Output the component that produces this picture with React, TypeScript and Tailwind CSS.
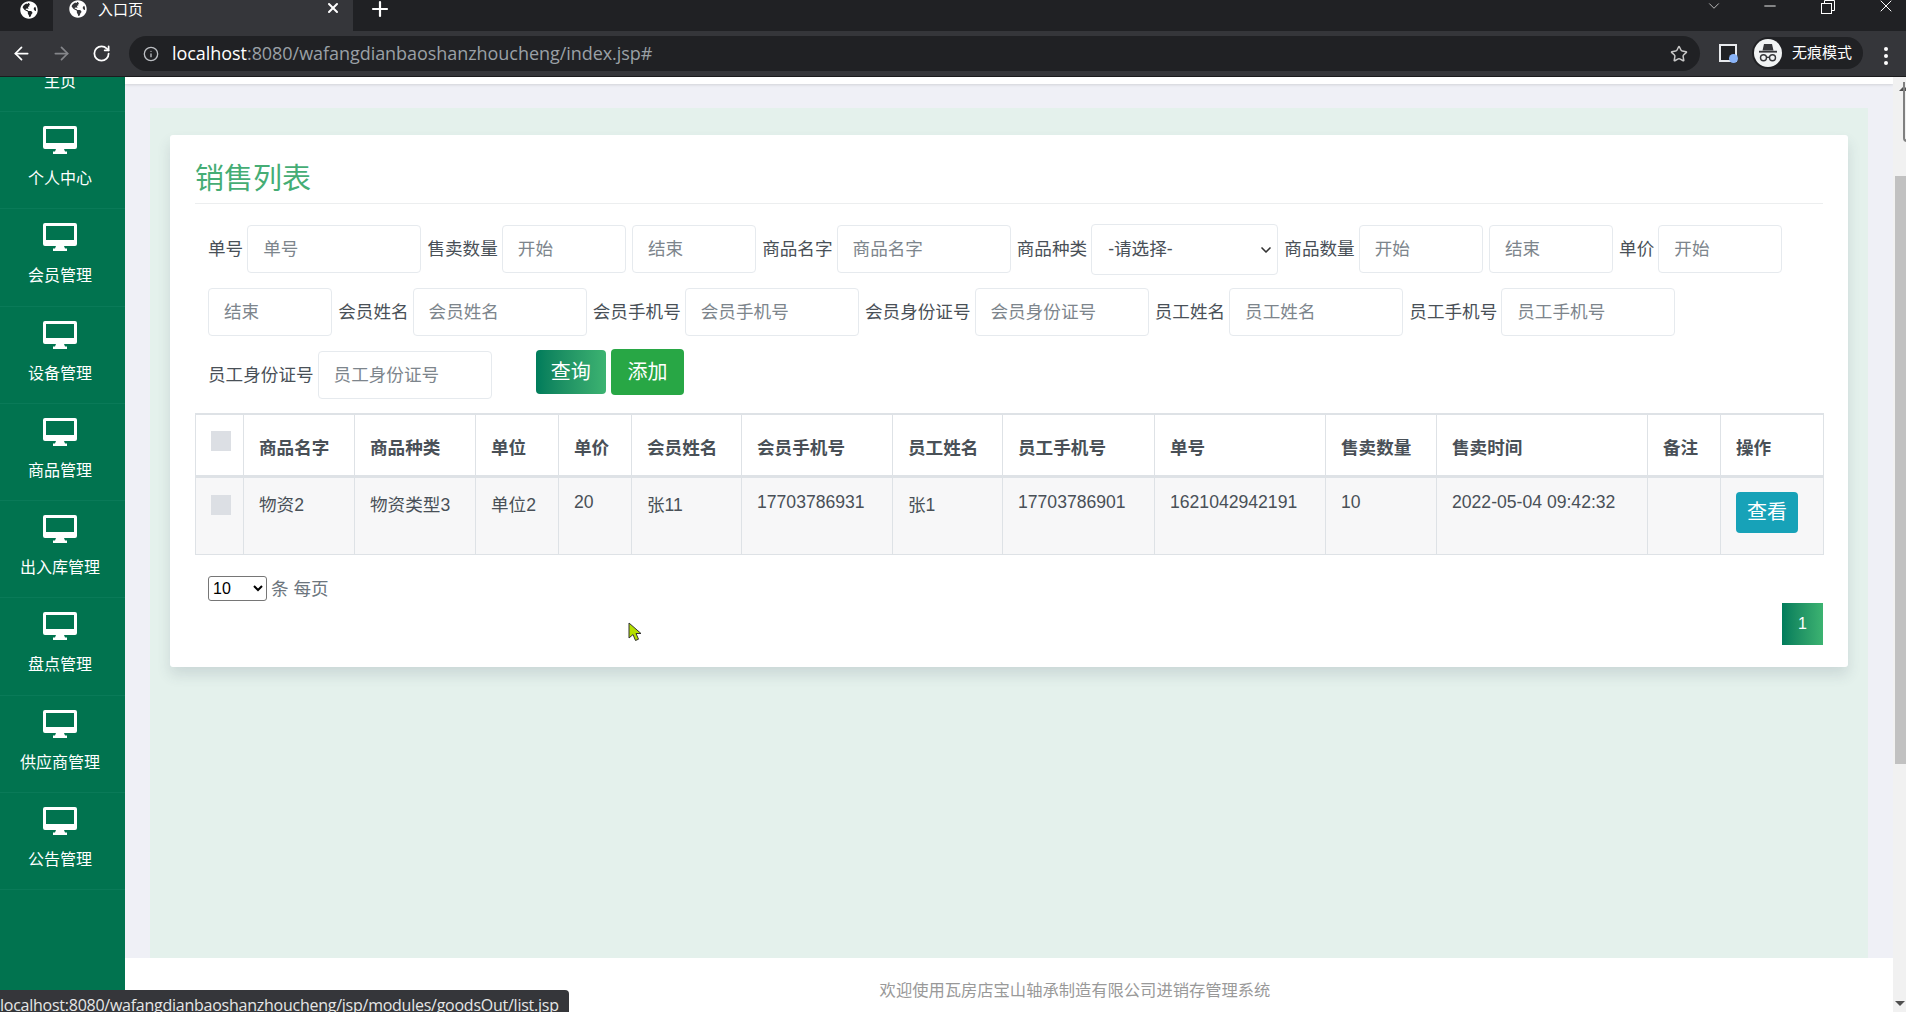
import { ArrowLeft, ArrowRight, ChevronDown, Info, Minus, Plus, RotateCw, Star, X } from "lucide-react"
import { FaGlobeAmericas } from "react-icons/fa"

const CJK = "font-['Liberation_Sans','Noto_Sans_CJK_SC',sans-serif]"

const NAV = ["主页", "个人中心", "会员管理", "设备管理", "商品管理", "出入库管理", "盘点管理", "供应商管理", "公告管理"]

const COLS = [48, 111, 121, 83, 73, 110, 151, 110, 152, 171, 111, 211, 73, 103]
const HEADS = ["商品名字", "商品种类", "单位", "单价", "会员姓名", "会员手机号", "员工姓名", "员工手机号", "单号", "售卖数量", "售卖时间", "备注", "操作"]
const ROW = ["物资2", "物资类型3", "单位2", "20", "张11", "17703786931", "张1", "17703786901", "1621042942191", "10", "2022-05-04 09:42:32", ""]

function Monitor() {
  return (
    <svg viewBox="0 0 34 28" className="h-[28px] w-[34px]" fill="#fff">
      <path
        fillRule="evenodd"
        d="M2 0h30a2 2 0 0 1 2 2v19a2 2 0 0 1-2 2H2a2 2 0 0 1-2-2V2a2 2 0 0 1 2-2zM3 3v14h28V3z"
      />
      <path d="M13 23h8l1 2.500h2V28H10v-2.500h2z" />
    </svg>
  )
}

function Incognito() {
  return (
    <svg viewBox="0 0 28 28" className="h-[28px] w-[28px]">
      <circle cx="14" cy="14" r="14" fill="#f1f3f4" />
      <path d="M10 5h8l1.500 6.500h-11z" fill="#35363a" />
      <rect x="5" y="11.800" width="18" height="1.800" fill="#35363a" />
      <circle cx="9.500" cy="18.800" r="3" fill="none" stroke="#35363a" strokeWidth="1.400" />
      <circle cx="18.500" cy="18.800" r="3" fill="none" stroke="#35363a" strokeWidth="1.400" />
      <path d="M12.500 18.300h3" stroke="#35363a" strokeWidth="1.400" />
    </svg>
  )
}

function Restore() {
  return (
    <svg viewBox="0 0 14 14" className="mr-[41px] mt-0 h-[14px] w-[14px]" fill="none" stroke="#fff" strokeWidth="1">
      <rect x="0.500" y="3.500" width="10" height="10" />
      <path d="M3.500 3.500V0.500h10v10h-3" />
    </svg>
  )
}

function Browser() {
  return (
    <div className="shrink-0">
      <div className="relative flex h-[31px] items-start overflow-hidden bg-[#202124]">
        <div className="flex h-[20px] w-[53px] items-center pl-[20px] text-white">
          <FaGlobeAmericas className="size-[18px]" />
        </div>
        <div className="flex h-[31px] w-[300px] items-start bg-[#35363a] pl-[16px] text-white">
          <FaGlobeAmericas className="mt-0 size-[18px]" />
          <span className="ml-[11px] text-[15px] leading-[20px]">入口页</span>
          <X className="ml-auto mr-[12px] size-[16px]" strokeWidth={3} />
        </div>
        <Plus className="ml-[15px] mt-[-3px] size-[24px] text-white" strokeWidth={2.200} />
        <ChevronDown className="ml-auto mr-[38px] mt-[-3px] size-[18px] text-[#c8c8c8]" strokeWidth={1.200} />
        <Minus className="mr-[42px] mt-[-3px] size-[18px] text-white" strokeWidth={1.200} />
        <Restore />
        <X className="mr-[10px] mt-[-4px] size-[20px] text-white" strokeWidth={1.200} />
      </div>
      <div className="flex h-[46px] items-start border-b border-[#1c1c1e] bg-[#35363a] pt-[5px]">
        <ArrowLeft className="ml-[11px] mt-[7px] size-[21px] text-white" strokeWidth={2} />
        <ArrowRight className="ml-[19px] mt-[7px] size-[21px] text-[#85868a]" strokeWidth={2} />
        <RotateCw className="ml-[20px] mt-[8px] size-[19px] text-white" strokeWidth={2.200} />
        <div className="ml-[18px] flex h-[35px] w-[1571px] items-center rounded-full bg-[#202124]">
          <Info className="ml-[14px] size-[16px] text-[#bcbfc3]" strokeWidth={2} />
          <span className="ml-[13px] font-['Open_Sans',sans-serif] text-[18px] tracking-[-0.05px] text-[#9aa0a6]">
            <span className="text-white">localhost</span>:8080/wafangdianbaoshanzhoucheng/index.jsp#
          </span>
          <Star className="ml-auto mr-[12px] size-[18px] text-[#c8c8c8]" strokeWidth={2} />
        </div>
        <div className="relative ml-[19px] mt-[8px] h-[18px] w-[18px] border-[2px] border-[#e8eaed] bg-[#202124]">
          <span className="absolute -bottom-[3px] -right-[3px] size-[9px] rounded-full bg-[#8ab4f8]" />
        </div>
        <div className="ml-[15px] mt-px flex h-[32px] w-[111px] items-center rounded-full bg-[#202124] pl-[2px]">
          <Incognito />
          <span className="ml-[10px] text-[15px] text-white">无痕模式</span>
        </div>
        <div className="ml-[21px] mt-[11px] flex flex-col gap-[3px]">
          <span className="size-[4px] rounded-full bg-white" />
          <span className="size-[4px] rounded-full bg-white" />
          <span className="size-[4px] rounded-full bg-white" />
        </div>
      </div>
    </div>
  )
}

function Sidebar() {
  return (
    <div className="w-[125px] shrink-0 overflow-hidden bg-[#01734f]">
      <div className="-mt-[62.300px]">
        {NAV.map((n) => (
          <div key={n} className="flex h-[97.300px] flex-col items-center border-b border-[#0a7a58] pr-[5px] pt-[14px] text-white">
            <Monitor />
            <span className="mt-[13px] text-[16px] leading-[24px]">{n}</span>
          </div>
        ))}
      </div>
    </div>
  )
}

function Label({ children }: { children: string }) {
  return <label className="mr-[-2.200px] whitespace-nowrap text-[17.600px] leading-[48px] text-[#495057]">{children}</label>
}

function Input({ w, ph }: { w: string; ph: string }) {
  return (
    <input
      placeholder={ph}
      className={`${w} h-[48px] rounded-[4px] border border-[#e6eaee] bg-white px-[15px] text-[17.600px] placeholder:text-[#7d858c]`}
    />
  )
}

function SearchForm() {
  const w174 = "w-[174px]"
  const w124 = "w-[124px]"
  const row = "flex items-start gap-x-[6.200px]"
  return (
    <div className="mb-[14px] ml-[13px] mt-[21px] flex flex-col gap-y-[15px]">
      <div className={row}>
        <Label>单号</Label>
        <Input w={w174} ph="单号" />
        <Label>售卖数量</Label>
        <Input w={w124} ph="开始" />
        <Input w={w124} ph="结束" />
        <Label>商品名字</Label>
        <Input w={w174} ph="商品名字" />
        <Label>商品种类</Label>
        <div className="relative -mb-[2px] -mt-px">
          <select className="h-[51px] w-[187px] appearance-none rounded-[4px] border border-[#e6eaee] bg-white pl-[16px] text-[17.600px] text-[#495057]">
            <option>-请选择-</option>
          </select>
          <ChevronDown className="pointer-events-none absolute right-[4px] top-[18px] size-[16px] text-[#333]" strokeWidth={2.500} />
        </div>
        <Label>商品数量</Label>
        <Input w={w124} ph="开始" />
        <Input w={w124} ph="结束" />
        <Label>单价</Label>
        <Input w={w124} ph="开始" />
      </div>
      <div className={row}>
        <Input w={w124} ph="结束" />
        <Label>会员姓名</Label>
        <Input w={w174} ph="会员姓名" />
        <Label>会员手机号</Label>
        <Input w={w174} ph="会员手机号" />
        <Label>会员身份证号</Label>
        <Input w={w174} ph="会员身份证号" />
        <Label>员工姓名</Label>
        <Input w={w174} ph="员工姓名" />
        <Label>员工手机号</Label>
        <Input w={w174} ph="员工手机号" />
      </div>
      <div className={row}>
        <Label>员工身份证号</Label>
        <Input w={w174} ph="员工身份证号" />
        <button className="-mt-px ml-[38px] h-[44px] w-[70px] rounded-[4px] bg-gradient-to-r from-[#007c5b] to-[#3cb371] text-[20px] text-white">
          查询
        </button>
        <button className="-ml-px -mt-[2px] h-[46px] w-[73px] rounded-[4px] bg-[#28a745] text-[20px] text-white">
          添加
        </button>
      </div>
    </div>
  )
}

function DataTable() {
  return (
    <table className="w-[1628px] table-fixed border-collapse text-[17.600px] text-[#495057]">
      <colgroup>
        {COLS.map((c, i) => (
          <col key={i} style={{ width: c }} />
        ))}
      </colgroup>
      <thead>
        <tr className="h-[62px]">
          <th className="border border-t-2 border-b-[3px] border-[#dee2e6] pb-[8px] pl-[15px] text-left">
            <div className="size-[20px] bg-[#dcdfe4]" />
          </th>
          {HEADS.map((h) => (
            <th key={h} className="border border-t-2 border-b-[3px] border-[#dee2e6] pl-[15px] pt-[7px] text-left font-bold">
              {h}
            </th>
          ))}
        </tr>
      </thead>
      <tbody>
        <tr className="h-[78px] bg-[#f7f7f8]">
          <td className="border border-[#dee2e6] pl-[15px] pt-[17px] align-top">
            <div className="size-[20px] bg-[#dcdfe4]" />
          </td>
          {ROW.map((c, i) =>
            /^[\d\s:-]+$/.test(c) ? (
              <td key={i} className="border border-[#dee2e6] pl-[15px] pt-[11px] align-top leading-[26px]">
                {c}
              </td>
            ) : (
              <td key={i} className="border border-[#dee2e6] pl-[15px] pt-[14px] align-top leading-[26px]">
                {c}
              </td>
            ),
          )}
          <td className="border border-[#dee2e6] pl-[15px] pt-[14px] align-top">
            <button className="h-[41px] w-[62px] rounded-[4px] bg-[#17a2b8] text-[20px] text-white">查看</button>
          </td>
        </tr>
      </tbody>
    </table>
  )
}

function ScrollBar() {
  return (
    <div className="relative flex w-[13px] shrink-0 flex-col overflow-hidden bg-[#f1f1f1]">
      <div className="ml-[6px] mt-[9px] h-0 w-0 border-x-[5px] border-b-[5px] border-x-transparent border-b-[#505050]" />
      <div className="ml-[2px] mt-[85px] h-[588px] flex-none bg-[#c1c1c1]" />
      <div className="mx-auto mb-[6px] mt-auto h-0 w-0 border-x-[5px] border-t-[5px] border-x-transparent border-t-[#505050]" />
      <div className="absolute left-[10px] top-[5px] h-[60px] w-[4px] rounded-bl-[4px] border-b-2 border-l-2 border-[#808080]" />
    </div>
  )
}

export default function App() {
  return (
    <div className={`${CJK} relative flex h-[1012px] flex-col overflow-hidden bg-white`}>
      <Browser />
      <div className="flex min-h-0 flex-1">
        <Sidebar />
        <div className="flex min-w-0 flex-1 flex-col">
          <div className="relative h-[7px] shrink-0 bg-white shadow-[0_1px_3px_rgba(0,0,0,0.12)]" />
          <div className="flex min-h-0 flex-1 flex-col bg-[#eff0f6] px-[25px] pt-[24px]">
            <div className="flex-1 bg-[#e4f1ec] px-[20px] pt-[27px]">
              <div className="h-[532px] rounded-[3px] bg-white px-[25px] shadow-[0_8px_14px_rgba(60,70,90,0.14)]">
                <h2 className="flex h-[69px] items-center border-b border-[#eceeef] pt-[19px] text-[29px] leading-[40px] text-[#45ad75]">
                  销售列表
                </h2>
                <SearchForm />
                <DataTable />
                <div className="ml-[13px] mt-[21px] flex items-center text-[17.600px] text-[#6c757d]">
                  <select className="mr-[4px] h-[25px] w-[59px] rounded-[3px] border border-[#767676] bg-white text-[16px] text-black">
                    <option>10</option>
                  </select>
                  条 每页
                </div>
                <div className="mt-px flex justify-end">
                  <span className="flex h-[42px] w-[41px] items-center justify-center bg-gradient-to-r from-[#007c5b] to-[#3cb371] text-[16px] text-white">
                    1
                  </span>
                </div>
              </div>
            </div>
          </div>
          <div className="flex h-[54px] shrink-0 justify-center bg-white pl-[132px] pt-[20px] text-[16.300px] leading-[24px] text-[#999]">
            欢迎使用瓦房店宝山轴承制造有限公司进销存管理系统
          </div>
        </div>
        <ScrollBar />
      </div>
      <div className="absolute bottom-0 left-0 h-[22px] w-[569px] overflow-hidden rounded-tr-[4px] bg-[#35363a] font-['Open_Sans',sans-serif] text-[16px] leading-[30px] tracking-[-0.25px] text-[#e6e6e6]">
        localhost:8080/wafangdianbaoshanzhoucheng/jsp/modules/goodsOut/list.jsp
      </div>
      <svg viewBox="0 0 14 20" className="absolute left-[628px] top-[622px] h-[20px] w-[14px]">
        <path d="M1 1v15l4-3.500 2.500 6 3-1.300-2.500-5.700h5z" fill="#b5e000" stroke="#333" strokeWidth="1" />
      </svg>
    </div>
  )
}
